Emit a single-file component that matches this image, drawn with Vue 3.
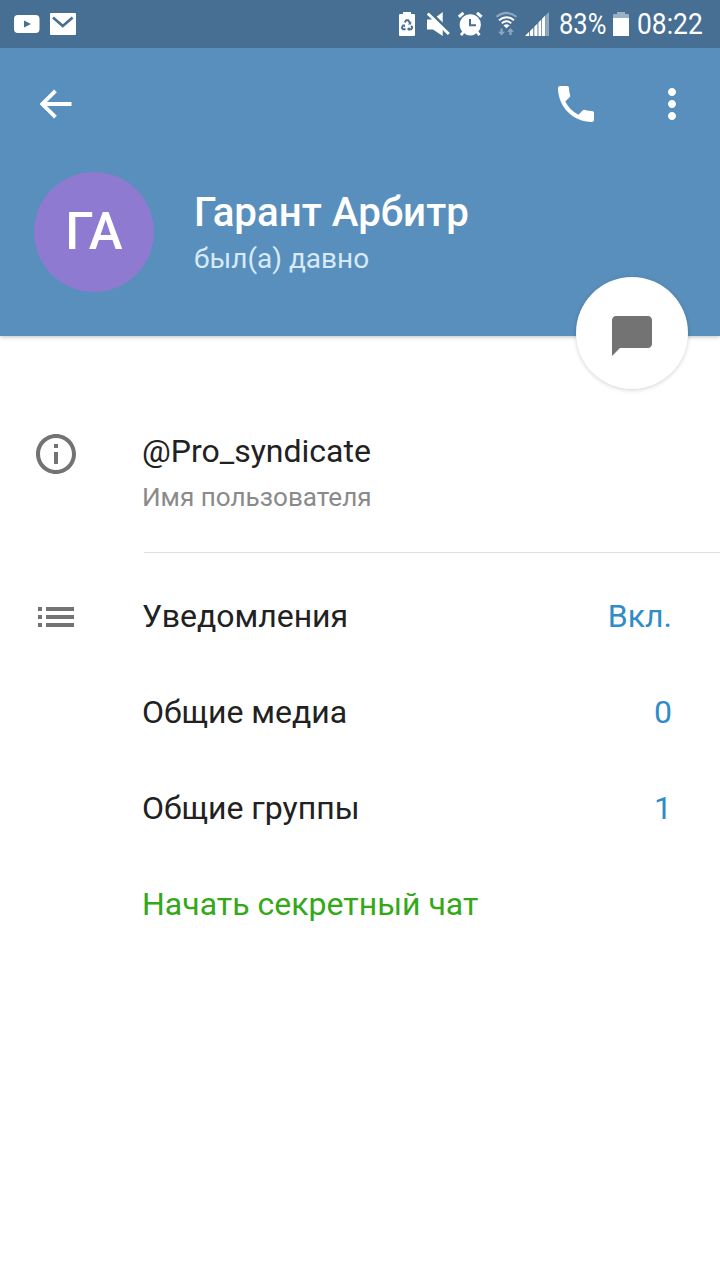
<template>
  <div class="screen">
    <div class="status-bar">
      <svg class="notif" width="26" height="18" viewBox="0 0 26 18">
        <rect width="25.500" height="18" rx="4" fill="#fff" />
        <path d="M10 5.500L17 9L10 12.500Z" fill="#476f93" />
      </svg>
      <svg class="mail" width="26" height="22" viewBox="0 0 26 22">
        <rect width="26" height="22" rx="1" fill="#fff" />
        <path d="M3 4.500L12.800 13L22.600 4.500" fill="none" stroke="#476f93" stroke-width="2.600" />
      </svg>

      <div class="status-icons">
        <svg width="150" height="26" viewBox="399 11 150 26">
          <!-- battery saver -->
          <path d="M400 14h3v-2h8v2h3q1 0 1 1v20q0 1-1 1h-14q-1 0-1-1v-20q0-1 1-1z" fill="#fff" />
          <path d="M404.800 22.600L406.200 20.300H408.200L409.800 22.800M411.300 25.600L412.200 27.600L411.200 29.200H409M405.600 29.200H402.900L401.900 27.600L403.100 25.400" fill="none" stroke="#476f93" stroke-width="1.900" />
          <path d="M411.200 21.300v3.300h-3.500zM409.400 27v4.200l-2.500-2.100zM401.300 25l3.400-.700l.6 3.200z" fill="#476f93" />
          <!-- muted speaker -->
          <path d="M427 19.500h6l9.700-7.500v24l-9.700-6.500h-6z" fill="#fff" />
          <path d="M429.500 12L451 33" stroke="#476f93" stroke-width="3.400" />
          <path d="M427.800 13.500L448.800 34" stroke="#fff" stroke-width="2.900" />
          <!-- alarm -->
          <circle cx="470.300" cy="24.800" r="10.600" fill="#fff" />
          <path d="M458.800 16.800l4.600-4M477 12.800l4.600 4" stroke="#fff" stroke-width="3" />
          <path d="M463.500 32l-2.500 3.200M477 32l2.500 3.200" stroke="#fff" stroke-width="2.800" />
          <path d="M470 19v6.200h6" fill="none" stroke="#476f93" stroke-width="2" />
          <!-- wifi -->
          <g fill="none" stroke="#fff" stroke-width="2">
            <path d="M496.500 16.800Q506.500 9 516.500 16.800" opacity=".4" />
            <path d="M499 20.200Q506.500 14.200 514 20.200" />
            <path d="M501.800 23.300Q506.500 19.300 511.200 23.300" />
          </g>
          <path d="M503.500 25.400Q506.500 23 509.500 25.400L506.500 28.200z" fill="#fff" />
          <path d="M500.500 28.500h2.200v3.300h2.300l-3.400 3.700l-3.400-3.700h2.300zM509.400 35v-3.300h-2.300l3.400-3.700l3.400 3.700h-2.300v3.300z" fill="#fff" opacity=".4" />
          <!-- signal -->
          <path d="M525 36l4.200-4.200v4.200zM530 36v-5l3.300-3.300v8.300zM534.300 36v-9.300l3.200-3.200v12.500zM538.400 36v-13.500l2.900-2.900v16.400zM542 36v-17.200l3.200-3.200v20.400z" fill="#fff" />
          <path d="M545.600 36v-20.800l3.400-3.200v24z" fill="#fff" opacity=".4" />
        </svg>
        <div class="percent"><span>83%</span></div>
        <svg class="battery" width="16" height="24" viewBox="0 0 16 24">
          <path d="M1 2h3v-2h8v2h3q1 0 1 1v3h-16v-3q0-1 1-1z" fill="#fff" opacity=".45" />
          <path d="M0 6h16v18h-16z" fill="#fff" />
        </svg>
        <div class="clock"><span>08:22</span></div>
      </div>
    </div>

    <header class="header">
      <div class="toolbar">
        <svg class="back" width="32" height="32" viewBox="0 0 32 32">
          <path d="M31.500 16H3M15.500 2.800L2.300 16L15.500 29.200" fill="none" stroke="#fff" stroke-width="3.800" />
        </svg>
        <svg class="call" width="48" height="48" viewBox="0 0 24 24">
          <path fill="#fff" d="M6.620 10.790c1.440 2.830 3.760 5.140 6.590 6.590l2.200-2.200c.270-.270.670-.360 1.020-.240 1.120.370 2.330.570 3.570.570.550 0 1 .450 1 1V20c0 .550-.450 1-1 1-9.390 0-17-7.610-17-17 0-.550.450-1 1-1h3.500c.550 0 1 .450 1 1 0 1.250.200 2.450.570 3.570.110.350.030.740-.250 1.020l-2.200 2.200z" />
        </svg>
        <svg class="more" width="48" height="48" viewBox="0 0 24 24">
          <path fill="#fff" d="M12 8c1.100 0 2-.900 2-2s-.900-2-2-2-2 .900-2 2 .900 2 2 2zm0 2c-1.100 0-2 .900-2 2s.900 2 2 2 2-.900 2-2-.900-2-2-2zm0 6c-1.100 0-2 .900-2 2s.900 2 2 2 2-.900 2-2-.900-2-2-2z" />
        </svg>
      </div>
      <div class="profile">
        <div class="avatar">ГА</div>
        <div class="profile-text">
          <div class="name">Гарант Арбитр</div>
          <div class="last-seen">был(а) давно</div>
        </div>
      </div>
      <button class="fab">
        <svg width="48" height="48" viewBox="0 0 24 24">
          <path fill="#737373" d="M20 2H4c-1.100 0-2 .900-2 2v18l4-4h14c1.100 0 2-.900 2-2V4c0-1.100-.900-2-2-2z" />
        </svg>
      </button>
    </header>

    <main>
      <section class="info">
        <svg class="info-icon" width="48" height="48" viewBox="0 0 24 24">
          <path fill="#737373" d="M11 17h2v-6h-2v6zm1-15C6.480 2 2 6.480 2 12s4.480 10 10 10 10-4.480 10-10S17.520 2 12 2zm0 18c-4.410 0-8-3.590-8-8s3.590-8 8-8 8 3.590 8 8-3.590 8-8 8zM11 9h2V7h-2v2z" />
        </svg>
        <div class="info-text">
          <div class="username">@Pro_syndicate</div>
          <div class="hint">Имя пользователя</div>
        </div>
      </section>

      <section class="rows">
        <div v-for="(row, index) in rows" :key="row.label" class="row">
          <div class="row-icon">
            <svg v-if="index === 0" width="36" height="20" viewBox="0 0 36 20">
              <path fill="#737373" d="M0 0h4v4H0zM8 0h28v4H8zM0 8h4v4H0zM8 8h28v4H8zM0 16h4v4H0zM8 16h28v4H8z" />
            </svg>
          </div>
          <div :class="['row-label', { secret: row.secret }]">{{ row.label }}</div>
          <div class="row-value">{{ row.value }}</div>
        </div>
      </section>
    </main>
  </div>
</template>

<script setup>
const rows = [
  { label: 'Уведомления', value: 'Вкл.' },
  { label: 'Общие медиа', value: '0' },
  { label: 'Общие группы', value: '1' },
  { label: 'Начать секретный чат', secret: true }
]
</script>

<style>
body {
  background: #fff;
}
</style>

<style scoped>
.screen {
  width: 720px;
  height: 1280px;
  overflow: hidden;
  background: #fff;
  font-family: Roboto, "Noto Sans", sans-serif;
  color: #212121;
}

svg {
  display: block;
  flex-shrink: 0;
}

.status-bar {
  position: relative;
  z-index: 1;
  box-sizing: border-box;
  height: 48px;
  padding: 0 16px 0 14px;
  display: flex;
  align-items: center;
  background: #476f93;
  color: #fff;
}

.mail {
  margin-left: 10px;
}

.status-icons {
  margin-left: auto;
  display: flex;
  align-items: center;
}

.percent,
.clock {
  font-size: 30px;
  line-height: 48px;
  height: 48px;
  white-space: nowrap;
}

.percent {
  width: 48px;
  margin-left: 10px;
}

.clock {
  width: 67px;
  margin-left: 8px;
}

.percent span,
.clock span {
  display: inline-block;
  transform: scaleX(0.88);
  transform-origin: left;
}

.percent span {
  transform: scaleX(0.85);
}

.battery {
  margin-left: 6px;
}

.header {
  position: relative;
  height: 288px;
  background: #598fbc;
  box-shadow: 0 1px 4px rgba(0, 0, 0, 0.25);
}

.toolbar {
  height: 112px;
  padding: 0 24px 0 40px;
  display: flex;
  align-items: center;
}

.call {
  margin-left: auto;
}

.more {
  margin-left: 48px;
}

.profile {
  display: flex;
  align-items: center;
  padding: 12px 34px 0;
}

.avatar {
  width: 120px;
  height: 120px;
  border-radius: 50%;
  background: #8e7ad0;
  color: #fff;
  font-size: 51px;
  font-weight: 500;
  line-height: 120px;
  text-align: center;
}

.profile-text {
  margin-left: 40px;
}

.name {
  color: #fff;
  font-size: 40.3px;
  font-weight: 500;
  line-height: 48px;
}

.last-seen {
  color: #d7eafa;
  font-size: 28px;
  line-height: 34px;
  margin-top: 5px;
}

/* sits across the lower edge of the header */
.fab {
  position: absolute;
  right: 32px;
  bottom: -53px;
  width: 112px;
  height: 112px;
  padding: 6px 0 0;
  border: 0;
  border-radius: 50%;
  background: #fff;
  box-shadow: 0 1px 4px rgba(0, 0, 0, 0.18);
  display: flex;
  align-items: center;
  justify-content: center;
}

.info {
  display: flex;
  padding: 94px 0 0 32px;
}

.info-text {
  flex: 1;
  margin-left: 64px;
  height: 122px;
  border-bottom: 1px solid #e0e0e0;
}

.username {
  margin-left: -2px;
  font-size: 32px;
  line-height: 42px;
}

.hint {
  margin-left: -2px;
  margin-top: 8px;
  font-size: 26.1px;
  line-height: 34px;
  color: #8a8a8a;
}

.rows {
  padding-top: 16px;
}

.row {
  display: flex;
  align-items: center;
  height: 96px;
  padding: 0 48px 0 38px;
  font-size: 32px;
}

.row-icon {
  width: 104px;
}

.row-label,
.row-value {
  padding-bottom: 2px;
}

.row-value {
  margin-left: auto;
  color: #2f8cc9;
}

.secret {
  color: #33a818;
}
</style>
